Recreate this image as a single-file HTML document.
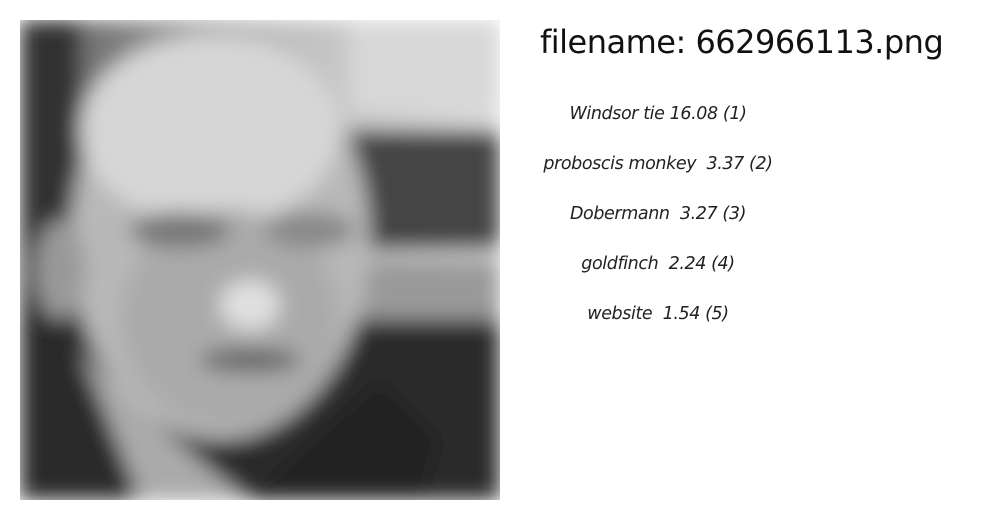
<!DOCTYPE html>
<html><head><style>
body{margin:0;width:1000px;height:520px;background:#fff;overflow:hidden;position:relative;font-family:"DejaVu Sans","Liberation Sans",sans-serif}
.t{position:absolute;left:540px;top:23px;font-size:32px;color:#111;white-space:nowrap;letter-spacing:-0.5px}
.r{position:absolute;left:540px;width:236px;text-align:center;font-style:italic;font-size:17.5px;color:#222;white-space:nowrap;letter-spacing:-0.4px}
</style></head><body>
<svg style="position:absolute;left:20px;top:20px" width="480" height="480" viewBox="0 0 480 480">
<defs><filter id="b" x="0" y="0" width="1" height="1"><feGaussianBlur stdDeviation="10" edgeMode="duplicate"/></filter>
<linearGradient id="bg" x1="0" y1="0" x2="1" y2="0"><stop offset="0" stop-color="#555"/><stop offset="0.5" stop-color="#bbb"/><stop offset="1" stop-color="#ddd"/></linearGradient></defs>
<g filter="url(#b)">
<rect width="480" height="480" fill="url(#bg)"/>
<rect x="330" y="0" width="150" height="90" fill="#d8d8d8"/>
<rect x="330" y="110" width="150" height="120" fill="#444"/>
<rect x="330" y="240" width="150" height="60" fill="#999"/>
<rect x="0" y="0" width="60" height="480" fill="#333"/>
<rect x="0" y="300" width="480" height="180" fill="#2a2a2a"/>
<path d="M60 330 Q150 420 230 480 L120 480 Z" fill="#aaa"/>
<path d="M230 480 Q290 420 360 360 L420 420 L400 480Z" fill="#222"/>
<ellipse cx="200" cy="220" rx="150" ry="200" fill="#b8b8b8"/>
<ellipse cx="190" cy="110" rx="130" ry="95" fill="#d6d6d6"/>
<ellipse cx="210" cy="300" rx="110" ry="110" fill="#aaa"/>
<ellipse cx="160" cy="210" rx="50" ry="18" fill="#777"/>
<ellipse cx="290" cy="210" rx="45" ry="18" fill="#888"/>
<ellipse cx="230" cy="285" rx="30" ry="25" fill="#e0e0e0"/>
<ellipse cx="230" cy="340" rx="50" ry="12" fill="#666"/>
<ellipse cx="40" cy="250" rx="25" ry="50" fill="#999"/>
</g>
</svg>
<div class="t">filename: 662966113.png</div>
<div class="r" style="top:104px">Windsor tie 16.08 (1)</div>
<div class="r" style="top:154px">proboscis monkey &nbsp;3.37 (2)</div>
<div class="r" style="top:204px">Dobermann &nbsp;3.27 (3)</div>
<div class="r" style="top:254px">goldfinch &nbsp;2.24 (4)</div>
<div class="r" style="top:304px">website &nbsp;1.54 (5)</div>
</body></html>
